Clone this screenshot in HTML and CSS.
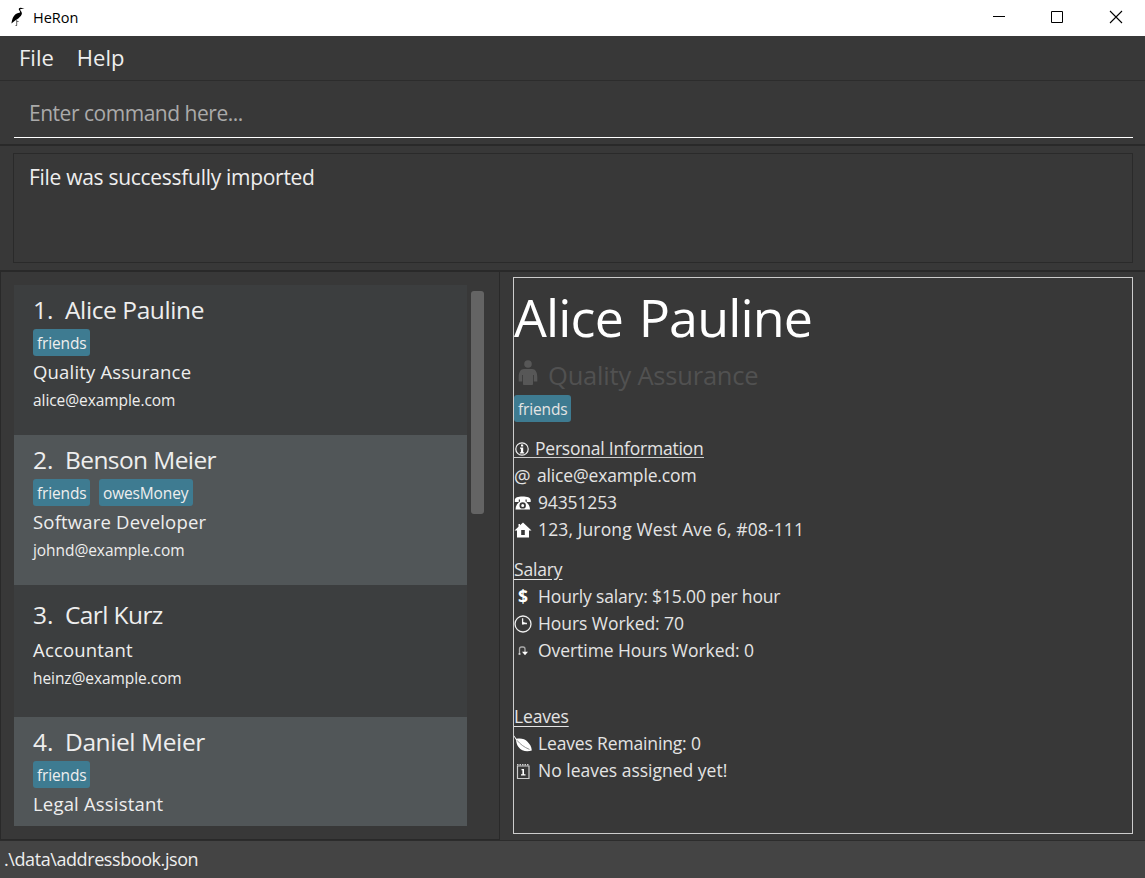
FILE: index.html
```html
<!DOCTYPE html>
<html lang="en">
<head>
<meta charset="utf-8">
<title>HeRon</title>
<link rel="stylesheet" href="styles.css">
</head>
<body>
<div class="window">
  <header class="titlebar">
    <svg class="logo" viewBox="0 0 14 20" width="14" height="20"><path d="M7.900 1.600C8.500.6 9.600.4 10.600.9L13.500 1.200 10.600 2C9.600 1.700 9 2 9.200 3c.4 1.300 1.800 1.800 1.700 3.600-.1 2-1.700 3.200-3.300 4.700L4.200 13.500.4 16.600 1 13.500C1.800 10 3.600 7.400 6.400 6.300 7.600 5.900 9.200 5.900 9.200 5 9 4 7.200 3 7.900 1.600z" fill="#000"/><path d="M5.700 12.500V18.500M4.500 18.500H6M5.800 14.500H7.600" stroke="#555" fill="none" stroke-width=".9"/></svg>
    <span class="title">HeRon</span>
    <div class="controls">
      <svg viewBox="0 0 14 14" width="14" height="14"><path d="M1 6.500H13" stroke="#000"/></svg>
      <svg viewBox="0 0 14 14" width="14" height="14"><path d="M1.500 1.500h11v11h-11z" stroke="#000" fill="none"/></svg>
      <svg viewBox="0 0 14 14" width="14" height="14"><path d="M1 1l12 12M13 1L1 13" stroke="#000" stroke-width="1.100"/></svg>
    </div>
  </header>
  <nav class="menu"><span class="file">File</span><span class="help">Help</span></nav>
  <section class="command"><div class="field">Enter command here...</div></section>
  <section class="result"><div class="result-box"><span>File was successfully imported</span></div></section>
  <main class="main">
    <section class="list-pane">
      <div class="list">
        <article class="card">
          <h2 class="name"><span class="num">1.</span><span>Alice Pauline</span></h2>
          <div class="tags"><span class="tag">friends</span></div>
          <p class="role">Quality Assurance</p>
          <p class="email">alice@example.com</p>
        </article>
        <article class="card alt">
          <h2 class="name"><span class="num">2.</span><span class="tight">Benson Meier</span></h2>
          <div class="tags"><span class="tag">friends</span><span class="tag owes">owesMoney</span></div>
          <p class="role">Software Developer</p>
          <p class="email">johnd@example.com</p>
        </article>
        <article class="card untagged">
          <h2 class="name"><span class="num">3.</span><span class="tight">Carl Kurz</span></h2>
          <div class="tags"></div>
          <p class="role">Accountant</p>
          <p class="email">heinz@example.com</p>
        </article>
        <article class="card alt">
          <h2 class="name"><span class="num">4.</span><span>Daniel Meier</span></h2>
          <div class="tags"><span class="tag">friends</span></div>
          <p class="role">Legal Assistant</p>
        </article>
      </div>
      <div class="scroll"><div class="thumb"></div></div>
    </section>
    <section class="detail">
      <h1 class="big"><span>Alice Pauline</span></h1>
      <div class="position">
        <svg viewBox="0 0 22 26" width="22" height="26"><circle cx="11" cy="4" r="3.800"/><path d="M7 9h8c3.500 0 5.300 3.500 5.300 8v4.500h-3.500V15h-.8v9c0 .8-.5 1-1 1H7c-.500 0-1-.2-1-1v-9h-.8v6.500H1.700V17C1.700 12.500 3.500 9 7 9z"/></svg>
        <span>Quality Assurance</span>
      </div>
      <div class="tags"><span class="tag">friends</span></div>
      <div class="group personal">
        <div class="line info"><svg viewBox="0 0 18 18" width="18" height="18"><circle cx="8" cy="9" r="6.200" fill="none" stroke="#eee" stroke-width="1.200"/><path d="M7 4.500h2.200v2H7zM6 7.500h3.200v4.700h1v1.200H5.900v-1.200h1V8.700H6z"/></svg><span>Personal Information</span></div>
        <div class="line"><span class="at">@</span><span>alice@example.com</span></div>
        <div class="line"><svg viewBox="0 0 18 18" width="18" height="18"><path fill-rule="evenodd" d="M.8 6C.8 3.500 4 2.500 8.500 2.500S16.700 3.500 16.700 6v2h-4V5.500h-1.200v2c2 1.500 4.500 4 4.500 8H1.500c0-4 2.300-6.500 4.500-8v-2H4.800V8h-4zM8.700 8.200a3.200 3.200 0 100 6.400 3.200 3.200 0 000-6.400zm0 1.700a1.500 1.500 0 110 3 1.500 1.500 0 010-3z"/></svg><span>94351253</span></div>
        <div class="line"><svg viewBox="0 0 18 18" width="18" height="18"><path fill-rule="evenodd" d="M9 1.500l8.500 7.900H15V16.500H3V9.400H.5L4.500 5.700V3H6v1.300zM7.200 9v5h3.600V9z"/></svg><span class="address">123, Jurong West Ave 6, #08-111</span></div>
      </div>
      <div class="group salary">
        <div class="line head"><span>Salary</span></div>
        <div class="line"><span class="dollar">$</span><span>Hourly salary: $15.00 per hour</span></div>
        <div class="line"><svg viewBox="0 0 18 18" width="18" height="18"><g fill="none" stroke="#eee" stroke-width="1.300"><circle cx="9" cy="9" r="8"/><path d="M8.600 3.200v5.300H13"/></g><path d="M8.300 6.800l4.300 1.500-4.300 1.500z"/></svg><span class="loose">Hours Worked: 70</span></div>
        <div class="line"><svg viewBox="0 0 18 18" width="18" height="18"><path d="M5.500 12.500V7q0-2 2-2H9q2 0 2 2v4" fill="none" stroke="#aaa" stroke-width="1.300"/><path d="M8 9.800h6l-3 3.500zM4.500 11.500h2v1h-2z"/></svg><span class="loose">Overtime Hours Worked: 0</span></div>
      </div>
      <div class="group leaves">
        <div class="line head"><span>Leaves</span></div>
        <div class="line"><svg viewBox="0 0 18 18" width="18" height="18"><path d="M0 .5l2.500 3.300C7 2.800 11 4 13.500 6.700 16 9.300 17.500 11.500 17.800 15.500 13 17.300 7.500 16.200 4.500 12 3 10 2.300 7.500 2 5L-.2 1.200z"/><path d="M3 5.300C6 9 10 12.200 15.500 14.400" stroke="#777" stroke-width=".8" fill="none"/></svg><span>Leaves Remaining: 0</span></div>
        <div class="line"><svg viewBox="0 0 18 18" width="18" height="18"><path d="M3.500 4h11.500v12.500H3.500z" fill="none" stroke="#ccc" stroke-width="1.200"/><path d="M3 2.800h12.500" stroke="#ccc" stroke-width="1.500" stroke-dasharray="1.500 1"/><path d="M7.500 7h2.500v5.300h1.500v1.300H7v-1.300h1.400V8.300h-.9z"/></svg><span class="unspaced">No leaves assigned yet!</span></div>
      </div>
    </section>
  </main>
  <footer class="status"><span>.\data\addressbook.json</span></footer>
</div>
</body>
</html>
```
FILE: styles.css
```css
* { box-sizing: border-box; margin: 0; padding: 0; font-weight: 400; }
body { background: #383838; color: #eee; font-family: "Open Sans", "Noto Sans", sans-serif; overflow: hidden; }
svg { display: block; flex: none; fill: #fff; overflow: visible; }
span { white-space: pre; }
.window { width: 1145px; height: 878px; display: flex; flex-direction: column; }
.titlebar { height: 36px; flex: none; background: #fff; color: #000; display: flex; align-items: center; padding: 0 22px 2px 11px; }
.title { font-size: 14.500px; margin-left: 8px; margin-top: 1px; }
.controls { margin-left: auto; display: flex; gap: 44px; }
.controls svg:last-child { margin-left: 1px; }
.menu { height: 45px; flex: none; border-bottom: 1px solid #2c2c2c; display: flex; gap: 23px; padding-left: 19px; font-size: 22px; line-height: 42px; }
.command { height: 63px; flex: none; padding: 10px 12px 0 14px; }
.field { height: 47px; border-bottom: 1.500px solid #fff; padding-left: 15px; font-size: 21px; letter-spacing: -.48px; line-height: 44px; color: #aaa; }
.result { height: 128px; flex: none; border-top: 2px solid #292929; border-bottom: 2px solid #292929; padding: 7px 12px 0 13px; }
.result-box { height: 110px; border: 1px solid #2a2a2a; padding: 8px 15px; font-size: 21px; letter-spacing: -.29px; line-height: 30px; }
.main { height: 568px; flex: none; display: flex; }
.list-pane { width: 500px; border: 1px solid #292929; border-top: 0; padding: 13px 14px 0 13px; display: flex; gap: 4px; }
.list { width: 453px; height: 541px; overflow: hidden; }
.scroll { padding-top: 6px; }
.thumb { width: 13px; height: 223px; background: #646464; border-radius: 3px; }
.card { height: 150px; padding: 8px 19px 0; background: #3c3e3f; }
.card.alt { background: #515658; }
.untagged { height: 132px; padding-top: 13px; }
.name { height: 34px; line-height: 34px; font-size: 24.500px; letter-spacing: -.4px; display: flex; }
.name .tight { letter-spacing: -.6px; }
.num { width: 32px; letter-spacing: 0; }
.tags { display: flex; gap: 9px; height: 27px; margin: 2px 0; }
.untagged .tags { height: 0; }
.tag { background: #3e7b91; border-radius: 3px; width: 57px; padding-left: 4px; font-size: 15.500px; letter-spacing: -.15px; line-height: 28px; }
.owes { width: 94px; }
.role { height: 28px; line-height: 28px; font-size: 18.500px; letter-spacing: .18px; white-space: nowrap; }
.email { height: 28px; line-height: 28px; font-size: 15.500px; letter-spacing: -.07px; white-space: nowrap; }
.detail { margin: 5px 0 6px 13px; width: 620px; border: 1px solid #ccc; color: #e4e4e4; }
.big { height: 79px; line-height: 77px; font-size: 52px; letter-spacing: -.85px; word-spacing: 3px; color: #fff; }
.position { height: 36px; padding-bottom: 1px; display: flex; align-items: center; gap: 9px; padding-left: 3px; color: #515151; font-size: 25.500px; letter-spacing: -.2px; }
.position svg { fill: #575757; margin-top: -3px; }
.line { height: 27px; line-height: 27px; font-size: 17.500px; letter-spacing: -.15px; display: flex; align-items: center; }
.line svg { margin-right: 6px; }
.line .address { letter-spacing: .12px; }
.line .loose { letter-spacing: -.06px; }
.line .unspaced { letter-spacing: 0; }
.personal { margin-top: 13px; }
.salary { margin-top: 13px; }
.leaves { margin-top: 39px; }
.head span { text-decoration: underline; text-underline-offset: 3px; }
.info { width: 190px; letter-spacing: -.22px; background: linear-gradient(#ccc, #ccc) 0 22px / 100% 1px no-repeat; }
.info svg { margin-right: 3px; }
.at { width: 23px; font-size: 18.500px; }
.dollar { width: 24px; padding-left: 4px; font-weight: 700; color: #fff; }
.status { height: 39px; flex: none; background: #444; border-top: 1px solid #2c2c2c; padding-left: 4px; font-size: 18px; letter-spacing: -.42px; line-height: 36px; }
```
